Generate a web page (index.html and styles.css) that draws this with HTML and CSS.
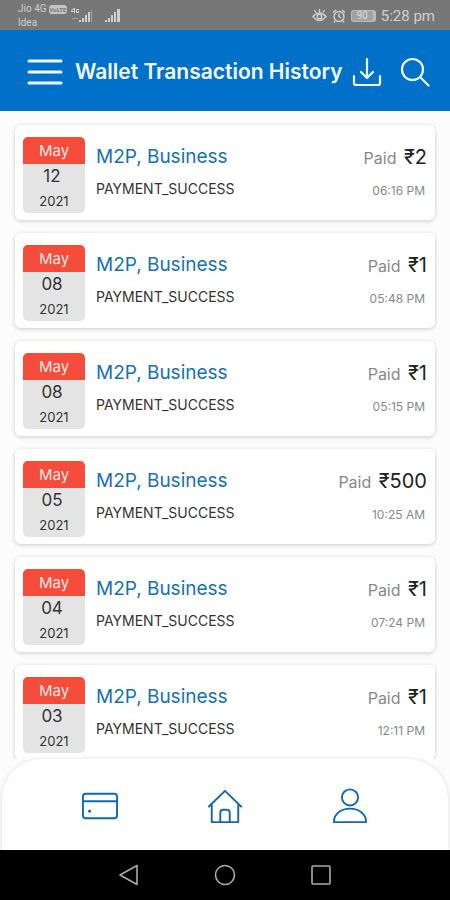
FILE: index.html
```html
<!DOCTYPE html>
<html lang="en">
<head>
<meta charset="utf-8">
<meta name="viewport" content="width=device-width, initial-scale=1">
<title>Wallet Transaction History</title>
<link rel="stylesheet" href="styles.css">
</head>
<body>
<div class="status">
  <div class="carriers">
    <div class="carrier">Jio 4G <span class="volte">VoLTE</span></div>
    <div class="carrier">Idea</div>
  </div>
  <svg class="signal" width="22" height="16" viewBox="0 0 22 16" fill="currentColor" aria-hidden="true"><path d="M3 0h1v5H3zM0 3h4v1H0zM0 2l3-2v1L1 3zM5 1h3v1H6v2h1V3h1v2H5zM8 12h2v2H8zM11 10h2v4h-2zM14 7h2v7h-2zM17 4h2v10h-2z"/><path opacity=".5" d="M20 2h1v12h-1zM1 10h6v1H1z"/></svg>
  <svg class="signal second" width="16" height="16" viewBox="0 0 16 16" fill="currentColor" aria-hidden="true"><path d="M0 12h2v2H0zM3 10h2v4H3zM6 7h2v7H6zM9 4h2v10H9zM12 1h3v13h-3z"/></svg>
  <div class="status-right">
    <svg width="15" height="14" viewBox="0 0 15 14" fill="none" stroke="currentColor" stroke-width="1.4" aria-hidden="true"><path d="M1 7.500q6.500-7 13 0q-6.500 8-13 0zM2.500 1l1.500 2.500M7.500 0v3M12.500 1L11 3.500"/><circle cx="7.500" cy="7.500" r="2.200"/></svg>
    <svg width="14" height="14" viewBox="0 0 14 14" fill="none" stroke="currentColor" stroke-width="1.400" aria-hidden="true"><circle cx="7" cy="7.500" r="5"/><path d="M7 4.500v3l2 1.500M1 3.500L4 1M13 3.500L10 1M3 12l-1 1.500M11 12l1 1.500"/></svg>
    <span class="battery">90</span>
    <span class="clock">5:28 pm</span>
  </div>
</div>
<header class="topbar">
  <button class="icon-btn" aria-label="Menu"><svg width="36" height="28" viewBox="0 0 36 28" stroke="currentColor" stroke-width="3" stroke-linecap="round"><path d="M2 3h32M2 14h32M2 25h32"/></svg></button>
  <h1>Wallet Transaction History</h1>
  <button class="icon-btn download" aria-label="Download"><svg width="30" height="30" viewBox="0 0 30 30" fill="none" stroke="currentColor" stroke-width="2.200" stroke-linecap="round" stroke-linejoin="round"><path d="M15 2v19M9 15l6 6 6-6M2 19v7q0 2 2 2h22q2 0 2-2v-7"/></svg></button>
  <button class="icon-btn" aria-label="Search"><svg width="30" height="30" viewBox="0 0 30 30" fill="none" stroke="currentColor" stroke-width="2.200" stroke-linecap="round"><circle cx="12.500" cy="12.500" r="10.500"/><path d="M20.500 20.500l8 8"/></svg></button>
</header>
<main class="list">
  <article class="card"><div class="date"><span class="month">May</span><span class="day">12</span><span class="year">2021</span></div><div class="info"><h2>M2P, Business</h2><p>PAYMENT_SUCCESS</p></div><div class="amount"><div class="paid">Paid <b>₹2</b></div><time>06:16 PM</time></div></article>
  <article class="card"><div class="date"><span class="month">May</span><span class="day">08</span><span class="year">2021</span></div><div class="info"><h2>M2P, Business</h2><p>PAYMENT_SUCCESS</p></div><div class="amount"><div class="paid">Paid <b>₹1</b></div><time>05:48 PM</time></div></article>
  <article class="card"><div class="date"><span class="month">May</span><span class="day">08</span><span class="year">2021</span></div><div class="info"><h2>M2P, Business</h2><p>PAYMENT_SUCCESS</p></div><div class="amount"><div class="paid">Paid <b>₹1</b></div><time>05:15 PM</time></div></article>
  <article class="card"><div class="date"><span class="month">May</span><span class="day">05</span><span class="year">2021</span></div><div class="info"><h2>M2P, Business</h2><p>PAYMENT_SUCCESS</p></div><div class="amount"><div class="paid">Paid <b>₹500</b></div><time>10:25 AM</time></div></article>
  <article class="card"><div class="date"><span class="month">May</span><span class="day">04</span><span class="year">2021</span></div><div class="info"><h2>M2P, Business</h2><p>PAYMENT_SUCCESS</p></div><div class="amount"><div class="paid">Paid <b>₹1</b></div><time>07:24 PM</time></div></article>
  <article class="card"><div class="date"><span class="month">May</span><span class="day">03</span><span class="year">2021</span></div><div class="info"><h2>M2P, Business</h2><p>PAYMENT_SUCCESS</p></div><div class="amount"><div class="paid">Paid <b>₹1</b></div><time>12:11 PM</time></div></article>
</main>
<nav class="tabs">
  <a href="#cards" aria-label="Cards"><svg width="36" height="36" viewBox="0 0 38 38" fill="none" stroke="currentColor" stroke-width="2"><rect x="1" y="6" width="36" height="26" rx="3"/><path d="M1 14h36"/><circle cx="8" cy="24.500" r="1.200" fill="currentColor" stroke-width="1"/></svg></a>
  <a href="#home" aria-label="Home"><svg width="36" height="36" viewBox="0 0 38 38" fill="none" stroke="currentColor" stroke-width="2" stroke-linecap="round" stroke-linejoin="round"><path d="M2 19.500L19 3l17 16.500M5 17v19h28V17M14 36V26q0-3 3-3h4q3 0 3 3v10"/></svg></a>
  <a href="#profile" aria-label="Profile"><svg width="36" height="36" viewBox="0 0 38 38" fill="none" stroke="currentColor" stroke-width="2"><circle cx="19" cy="10" r="8.500"/><path d="M2 36c0-19 34-19 34 0z" stroke-linejoin="round"/></svg></a>
</nav>
<div class="system">
  <button aria-label="Back"><svg width="22" height="22" viewBox="0 0 22 22" fill="none" stroke="currentColor" stroke-width="1.600" stroke-linejoin="round"><path d="M19 1.500v19L2 11z"/></svg></button>
  <button aria-label="Home screen"><svg width="22" height="22" viewBox="0 0 22 22" fill="none" stroke="currentColor" stroke-width="1.600"><circle cx="11" cy="11" r="9.500"/></svg></button>
  <button aria-label="Recent apps"><svg width="22" height="22" viewBox="0 0 22 22" fill="none" stroke="currentColor" stroke-width="1.600"><rect x="2" y="2" width="18" height="18" rx="1"/></svg></button>
</div>
</body>
</html>
```
FILE: styles.css
```css
* { box-sizing: border-box; }
body {
  margin: 0;
  height: 100vh;
  display: flex;
  flex-direction: column;
  background: #fcfcfc;
  font-family: Inter, "Liberation Sans", sans-serif;
  color: #333;
}
h1, h2, p { margin: 0; font-weight: 400; }
button { border: 0; padding: 0; background: none; color: inherit; }
svg { display: block; }

.status {
  flex: none;
  height: 30px;
  display: flex;
  align-items: center;
  padding: 2px 15px 0 18px;
  background: #777;
  color: #d0d0d0;
  font-family: Roboto, sans-serif;
}
.carrier { display: flex; align-items: center; gap: 2px; height: 14px; font-size: 10px; line-height: 14px; }
.volte { padding: 0 1px; border-radius: 3px; background: #c4c4c4; color: #777; font-size: 6px; line-height: 9px; font-weight: 700; }
.signal { margin-left: 4px; }
.second { margin-left: 12px; }
.status-right { display: flex; align-items: center; gap: 5px; margin-left: auto; }
.battery { width: 25px; height: 12px; border: 1px solid #bbb; border-right-width: 3px; border-radius: 3px; background: #a2a2a2; color: #ddd; font-size: 10px; line-height: 10px; text-align: center; }
.clock { font-size: 15px; line-height: 20px; }

.topbar {
  flex: none;
  height: 81px;
  display: flex;
  align-items: center;
  padding: 2px 20px 0 27px;
  background: #0070c8;
  color: #f2faff;
}
.topbar h1 { flex: 1; margin-left: 12px; font-size: 21px; line-height: 28px; font-weight: 600; white-space: nowrap; }
.download { margin-right: 18px; }

.list {
  flex: 1;
  min-height: 0;
  overflow: hidden;
  display: flex;
  flex-direction: column;
  gap: 13px;
  padding: 14px 15px 0;
}
.card {
  flex: none;
  display: flex;
  align-items: flex-start;
  padding: 12px 8px 7px;
  border-radius: 6px;
  background: #fff;
  box-shadow: 0 1px 4px rgba(0, 0, 0, 0.2);
}
.date {
  width: 62px;
  display: flex;
  flex-direction: column;
  border-radius: 5px;
  overflow: hidden;
  background: #e4e4e4;
  text-align: center;
}
.month { background: #f54c3c; color: #ffe9e4; font-size: 15px; line-height: 27px; }
.day { padding-right: 4px; font-size: 17px; line-height: 25px; }
.year { font-size: 13px; line-height: 24px; }
.info { flex: 1; margin-left: 11px; padding-top: 8px; }
.info h2 { font-size: 19px; line-height: 24px; color: #1571b4; }
.info p { padding-top: 10px; font-size: 14px; line-height: 20px; }
.amount { padding-top: 8px; text-align: right; white-space: nowrap; }
.paid { font-size: 16px; line-height: 24px; color: #888; }
.paid b { margin-left: 3px; font-size: 20px; font-weight: 400; color: #222; }
.amount time { display: block; padding: 11px 2px 0 0; font-size: 12px; line-height: 20px; color: #888; }

.tabs {
  flex: none;
  height: 91px;
  display: grid;
  grid-template-columns: repeat(3, 1fr);
  align-items: center;
  margin: 0 2px;
  padding: 2px 36px 0;
  border-radius: 40px 40px 0 0;
  background: #fff;
  box-shadow: 0 0 5px rgba(0, 0, 0, 0.12);
}
.tabs a { display: flex; justify-content: center; color: #1268b0; }

.system {
  flex: none;
  height: 50px;
  display: grid;
  grid-template-columns: repeat(3, 96px);
  justify-content: center;
  align-items: center;
  background: #000;
  color: #aaa;
  position: relative;
}
.system button { display: flex; justify-content: center; }
```
